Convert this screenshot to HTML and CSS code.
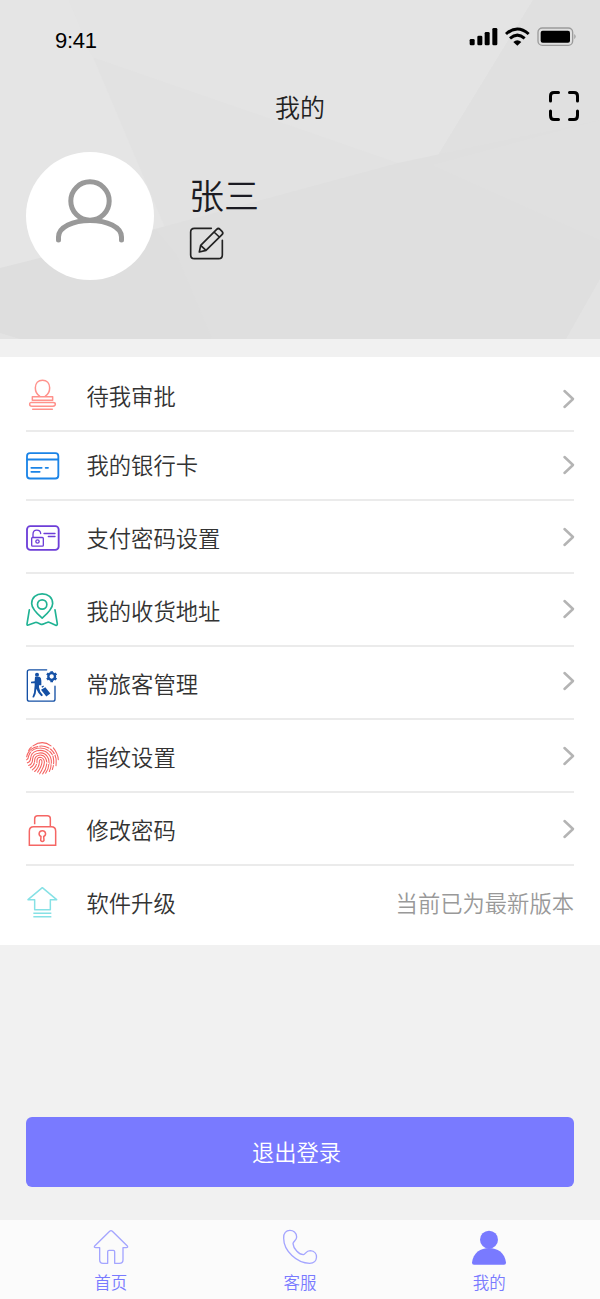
FILE: index.html
```html
<!DOCTYPE html>
<html lang="zh-CN">
<head>
<meta charset="utf-8">
<title>我的</title>
<link rel="stylesheet" href="styles.css">
</head>
<body>
<div class="screen">
  <header class="hero">
    <svg class="facets" viewBox="0 0 600 339" preserveAspectRatio="none">
      <rect width="600" height="339" fill="#e2e2e2"/>
      <path d="M0 0H69L212 339H0Z" fill="#e5e5e5"/>
      <path d="M69 0H533L432 165 398 163 92 57Z" fill="#e4e4e4"/>
      <path d="M533 0H600V125L432 165Z" fill="#e0e0e0"/>
      <path d="M155 229L398 163 600 120V339H212Z" fill="#dfdfdf"/>
      <path d="M432 165L600 240V120Z" fill="#e0e0e0"/>
      <path d="M0 268L155 229 177 256 212 339H0Z" fill="#dedede"/>
      <path d="M600 279V339H566ZM0 333L20 339H0Z" fill="#e3e3e3"/>
    </svg>
    <div class="status">
      <span class="time">9:41</span>
      <svg class="signals" width="110" height="24" viewBox="84 45 330 72">
        <g fill="#000"><rect x="89" y="87" width="15" height="19" rx="4"/><rect x="112" y="77" width="15" height="29" rx="4"/><rect x="134" y="66" width="15" height="40" rx="4"/><rect x="157" y="54" width="15" height="52" rx="4"/><path d="M220 96Q232 86 244 96L232 107Z"/></g>
        <g fill="none" stroke="#000" stroke-width="9"><path d="M198 72Q232 42 266 72"/><path d="M210 85Q232 66 254 85"/></g>
        <rect x="294" y="54" width="104" height="52" rx="13" fill="none" stroke="#9b9b9b" stroke-width="4"/>
        <rect x="302" y="62" width="88" height="36" rx="6"/><path d="M403 72Q411 79 403 88Z" fill="#9b9b9b"/>
      </svg>
    </div>
    <div class="titlebar">
      <h1 class="title">我的</h1>
      <svg class="scan" width="32" height="32" viewBox="0 0 32 32" fill="none" stroke="#000" stroke-width="3" stroke-linecap="round"><path d="M2.500 11V6Q2.500 2.500 6 2.500H10.500M21.500 2.500H26Q29.500 2.500 29.500 6V11M29.500 21V25.500Q29.500 29.500 26 29.500H21.500M10.500 29.500H6Q2.500 29.500 2.500 25.500V21"/></svg>
    </div>
    <div class="profile">
      <div class="avatar">
        <svg width="72" height="66" viewBox="0 0 72 66" fill="none" stroke="#999" stroke-width="5" stroke-linecap="round"><circle cx="36" cy="22" r="19.200"/><path d="M4.500 61V58C4.500 48 19 41.500 36 41.500S67.500 48 67.500 58V61"/></svg>
      </div>
      <div class="identity">
        <div class="name">张三</div>
        <svg width="36" height="36" viewBox="567 258 108 108" fill="none" stroke="#222" stroke-width="5" stroke-linejoin="round" stroke-linecap="round"><path d="M634 265H583Q572 265 572 276V345Q572 356 583 356H656Q667 356 667 345V301"/><path d="M598 336L602 316 650 268Q655 263 660 268L666 274Q671 279 666 284L618 331ZM602 316L618 331M642 276L658 291"/></svg>
      </div>
    </div>
  </header>

  <main class="menu">
    <div class="row row-first">
      <svg class="icon" viewBox="72 40.500 120 120" fill="none" stroke="#ff928c" stroke-width="4.500" stroke-linejoin="round" stroke-linecap="round"><path d="M119 107C109 101 106 92 106 82C106 68 115 59 127.500 59S149 68 149 82C149 92 146 101 136 107"/><path d="M97 109H158V119H97ZM96 126H159Q166 126 166 131T159 137H96Q89 137 89 131T96 126ZM98 146H157"/></svg>
      <span class="label">待我审批</span>
      <svg class="chevron" viewBox="0 0 14 22"><path d="M2.500 3L11 11L2.500 19"/></svg>
    </div>
    <div class="row row-card">
      <svg class="icon" viewBox="72 256.500 120 120" fill="none" stroke="#1b84e7" stroke-width="5.500" stroke-linecap="round"><rect x="81" y="278" width="94" height="76" rx="9"/><path d="M82 297H174M94 322H125M137 322H144M94 334H119"/></svg>
      <span class="label">我的银行卡</span>
      <svg class="chevron" viewBox="0 0 14 22"><path d="M2.500 3L11 11L2.500 19"/></svg>
    </div>
    <div class="row">
      <svg class="icon" viewBox="72 19.500 120 120" fill="none" stroke="#6d3ed8" stroke-width="4" stroke-linecap="round"><rect x="81" y="47" width="95" height="71" rx="10" stroke-width="5.500"/><rect x="95" y="81" width="35" height="26" rx="3"/><path d="M99 80V71C99 55 121 56 122 69M132 69H165M145 78H165"/><circle cx="112.500" cy="93" r="5"/></svg>
      <span class="label">支付密码设置</span>
      <svg class="chevron" viewBox="0 0 14 22"><path d="M2.500 3L11 11L2.500 19"/></svg>
    </div>
    <div class="row row-address">
      <svg class="icon" viewBox="72 238.500 120 120" fill="none" stroke="#20b394" stroke-width="5" stroke-linejoin="round" stroke-linecap="round"><path d="M126.500 323C108 307 95 294 95 279C95 261 109 250 126.500 250S158 261 158 279C158 294 145 307 126.500 323Z"/><circle cx="126.500" cy="282" r="14"/><path d="M88 298L81 341Q81 346 87 343L106 336Q109 335 113 337L122 341Q127 343 132 340L141 336Q145 334 149 336L167 344Q172 346 172 340L165 298"/></svg>
      <span class="label">我的收货地址</span>
      <svg class="chevron" viewBox="0 0 14 22"><path d="M2.500 3L11 11L2.500 19"/></svg>
    </div>
    <div class="row row-traveler">
      <svg class="icon" viewBox="72 37.500 120 120" fill="none" stroke="#1450a5" stroke-width="4" stroke-linecap="round"><path d="M140 58H88Q82 58 82 64V146Q82 152 88 152H159Q165 152 165 146V107"/><circle cx="155" cy="78" r="10" stroke-width="7"/><path d="M155 66V62M165 72L169 69M165 84L169 87M155 90V95M145 84L141 87M145 72L141 69" stroke-width="8" stroke-linecap="butt"/><g fill="#1450a5" stroke="none"><circle cx="111" cy="73" r="6"/><path d="M105 79H118Q124 81 124 91V104H117V110L121 124 129 134 124 137 115 127 109 115 107 130 102 141 97 140 102 126 104 104V98L93 98V94L104 92Z"/><path d="M123 118L136 110 151 129 139 138ZM124 109L130 105 132 108 127 112Z"/></g></svg>
      <span class="label">常旅客管理</span>
      <svg class="chevron" viewBox="0 0 14 22"><path d="M2.500 3L11 11L2.500 19"/></svg>
    </div>
    <div class="row">
      <svg class="icon" viewBox="72 256.500 120 120" fill="none" stroke="#f56462" stroke-width="3.200" stroke-linecap="round"><path d="M99 286Q127 267 153 286M86 300Q89 294 94 290M160 292Q174 309 175 328M80 319Q84 299 103 291Q126 281 145 292Q163 301 168 324Q169 331 168 346M80 328Q85 326 86 316Q91 298 111 293Q132 290 145 300Q160 309 161 329Q162 344 157 357M82 337Q91 335 92 323Q93 306 111 301Q132 296 145 310Q155 320 154 338Q153 353 148 363M86 345Q98 341 98 325Q99 310 115 308Q132 304 141 317Q148 325 147 339Q146 356 137 368M91 352Q105 344 104 328Q105 317 117 314Q130 312 136 322Q142 331 140 342Q138 358 128 370M97 358Q111 348 111 332Q110 321 120 320Q131 321 133 333Q134 347 119 370M104 363Q119 349 118 332Q120 324 125 329Q129 342 113 365"/><path d="M115 281L117 291M91 301L97 307M150 292L147 302M165 311L158 315M139 337L146 339M105 337L111 339M155 341L162 343" stroke="#fff" stroke-width="3"/></svg>
      <span class="label">指纹设置</span>
      <svg class="chevron" viewBox="0 0 14 22"><path d="M2.500 3L11 11L2.500 19"/></svg>
    </div>
    <div class="row">
      <svg class="icon" viewBox="72 25.500 120 120" fill="none" stroke="#f56664" stroke-width="4.500"><path d="M104 71V55Q104 46 113 46H142Q151 46 151 55V78M88 134V92Q88 79 101 79H154Q167 79 167 92V134Z"/><path d="M123 108C114 104 116 91 127 91S140 104 131 108L132 120Q127 126 122 120Z" stroke-linejoin="round"/></svg>
      <span class="label">修改密码</span>
      <svg class="chevron" viewBox="0 0 14 22"><path d="M2.500 3L11 11L2.500 19"/></svg>
    </div>
    <div class="row row-last">
      <svg class="icon" viewBox="72 246 120 120" fill="none" stroke="#86e1e5" stroke-width="4.500" stroke-linejoin="round"><path d="M127 263L170 299H151V329H104V299H84ZM100 340H154M100 350H154"/></svg>
      <span class="label">软件升级</span>
      <span class="version">当前已为最新版本</span>
    </div>
  </main>

  <div class="actions"><button class="logout" type="button">退出登录</button></div>

  <nav class="tabs">
    <a class="tab">
      <svg width="36" height="36" viewBox="99 57 108 108" fill="none" stroke="#a4a5ff" stroke-width="4" stroke-linejoin="round"><path d="M149 64Q153 60 157 64L202 108Q205 113 199 113H189V149Q189 160 178 160H164V125Q164 121 160 121H147Q143 121 143 125V160H129Q119 160 119 149V113H107Q101 113 104 108Z"/></svg>
      <span>首页</span>
    </a>
    <a class="tab">
      <svg width="36" height="36" viewBox="666 57 108 108" fill="none" stroke="#a4a5ff" stroke-width="4" stroke-linejoin="round"><path d="M671 85C668 53 710 55 710 81C710 91 700 94 699 101C700 116 717 134 730 134C737 133 737 122 751 122C777 124 775 160 749 160C711 160 671 123 671 85Z"/></svg>
      <span>客服</span>
    </a>
    <a class="tab">
      <svg width="36" height="36" viewBox="213 390 108 108" fill="#797aff"><circle cx="267" cy="422" r="27"/><path d="M216 491C219 461 242 447 267 447S315 461 318 491Q318 497 312 497H222Q216 497 216 491Z"/></svg>
      <span>我的</span>
    </a>
  </nav>
</div>
</body>
</html>
```
FILE: styles.css
```css
* { box-sizing: border-box; }
body { margin: 0; font-family: "Noto Sans CJK SC", sans-serif; font-weight: 350; color: #333; }
.screen { width: 600px; height: 1299px; background: #f1f1f1; display: flex; flex-direction: column; overflow: hidden; }
svg { display: block; flex: none; }

.hero { position: relative; height: 339px; flex: none; }
.facets { position: absolute; inset: 0; width: 600px; height: 339px; }
.status, .titlebar, .profile { position: relative; }
.status { height: 80px; padding: 25px 22px 0 55px; display: flex; justify-content: space-between; align-items: flex-start; }
.time { font: 22px/32px "Liberation Sans", Arial, sans-serif; letter-spacing: -0.3px; color: #000; }
.titlebar { height: 52px; padding: 0 20px; display: grid; grid-template-columns: 32px 1fr 32px; align-items: center; }
.title { grid-column: 2; margin: 0; font-size: 25px; font-weight: 350; line-height: 36px; text-align: center; color: #222; }
.profile { display: flex; padding: 20px 25.5px 0; gap: 35.5px; }
.avatar { width: 128px; height: 128px; border-radius: 50%; background: #fff; display: flex; justify-content: center; padding-top: 27px; }
.identity { padding-top: 17px; }
.name { font-size: 35px; line-height: 50px; color: #1b1b22; margin-bottom: 7px; }

.menu { margin-top: 18px; background: #fff; padding: 0 26px; flex: none; }
.row { height: 73px; border-bottom: 2px solid #ebebeb; display: flex; align-items: center; }
.row-first { height: 75px; }
.row-card { height: 69px; }
.row-last { height: 79px; border-bottom: 0; padding-bottom: 7px; }
.icon { width: 40px; height: 40px; margin-left: -2px; }
.label { margin-left: 22.500px; font-size: 22.300px; line-height: 32px; flex: 1; }
.row-first .label { padding-top: 2px; }
.row-card .label { padding-bottom: 3px; }
.chevron { width: 14px; height: 22px; margin-right: -2px; fill: none; stroke: #b4b4b4; stroke-width: 2.500; stroke-linecap: round; stroke-linejoin: round; }
.row-first .chevron { margin-top: 10px; }
.row-card .chevron { margin-bottom: 2px; }
.row-address .chevron { margin-bottom: 2px; }
.row-traveler .chevron { margin-bottom: 4px; }
.version { font-size: 22.300px; color: #999; }

.actions { padding: 172px 26px 0; }
.logout { display: block; width: 100%; height: 70px; padding: 0 7px 2px 0; border: 0; border-radius: 6px; background: #797aff; color: #fff; font: 350 22.300px "Noto Sans CJK SC", sans-serif; }
.tabs { margin-top: auto; height: 79px; flex: none; background: #fbfbfb; padding: 9px 16px 0; display: grid; grid-template-columns: repeat(3, 1fr); }
.tab { display: flex; flex-direction: column; align-items: center; color: #797aff; font-size: 16.500px; line-height: 24px; gap: 5px; }
```
